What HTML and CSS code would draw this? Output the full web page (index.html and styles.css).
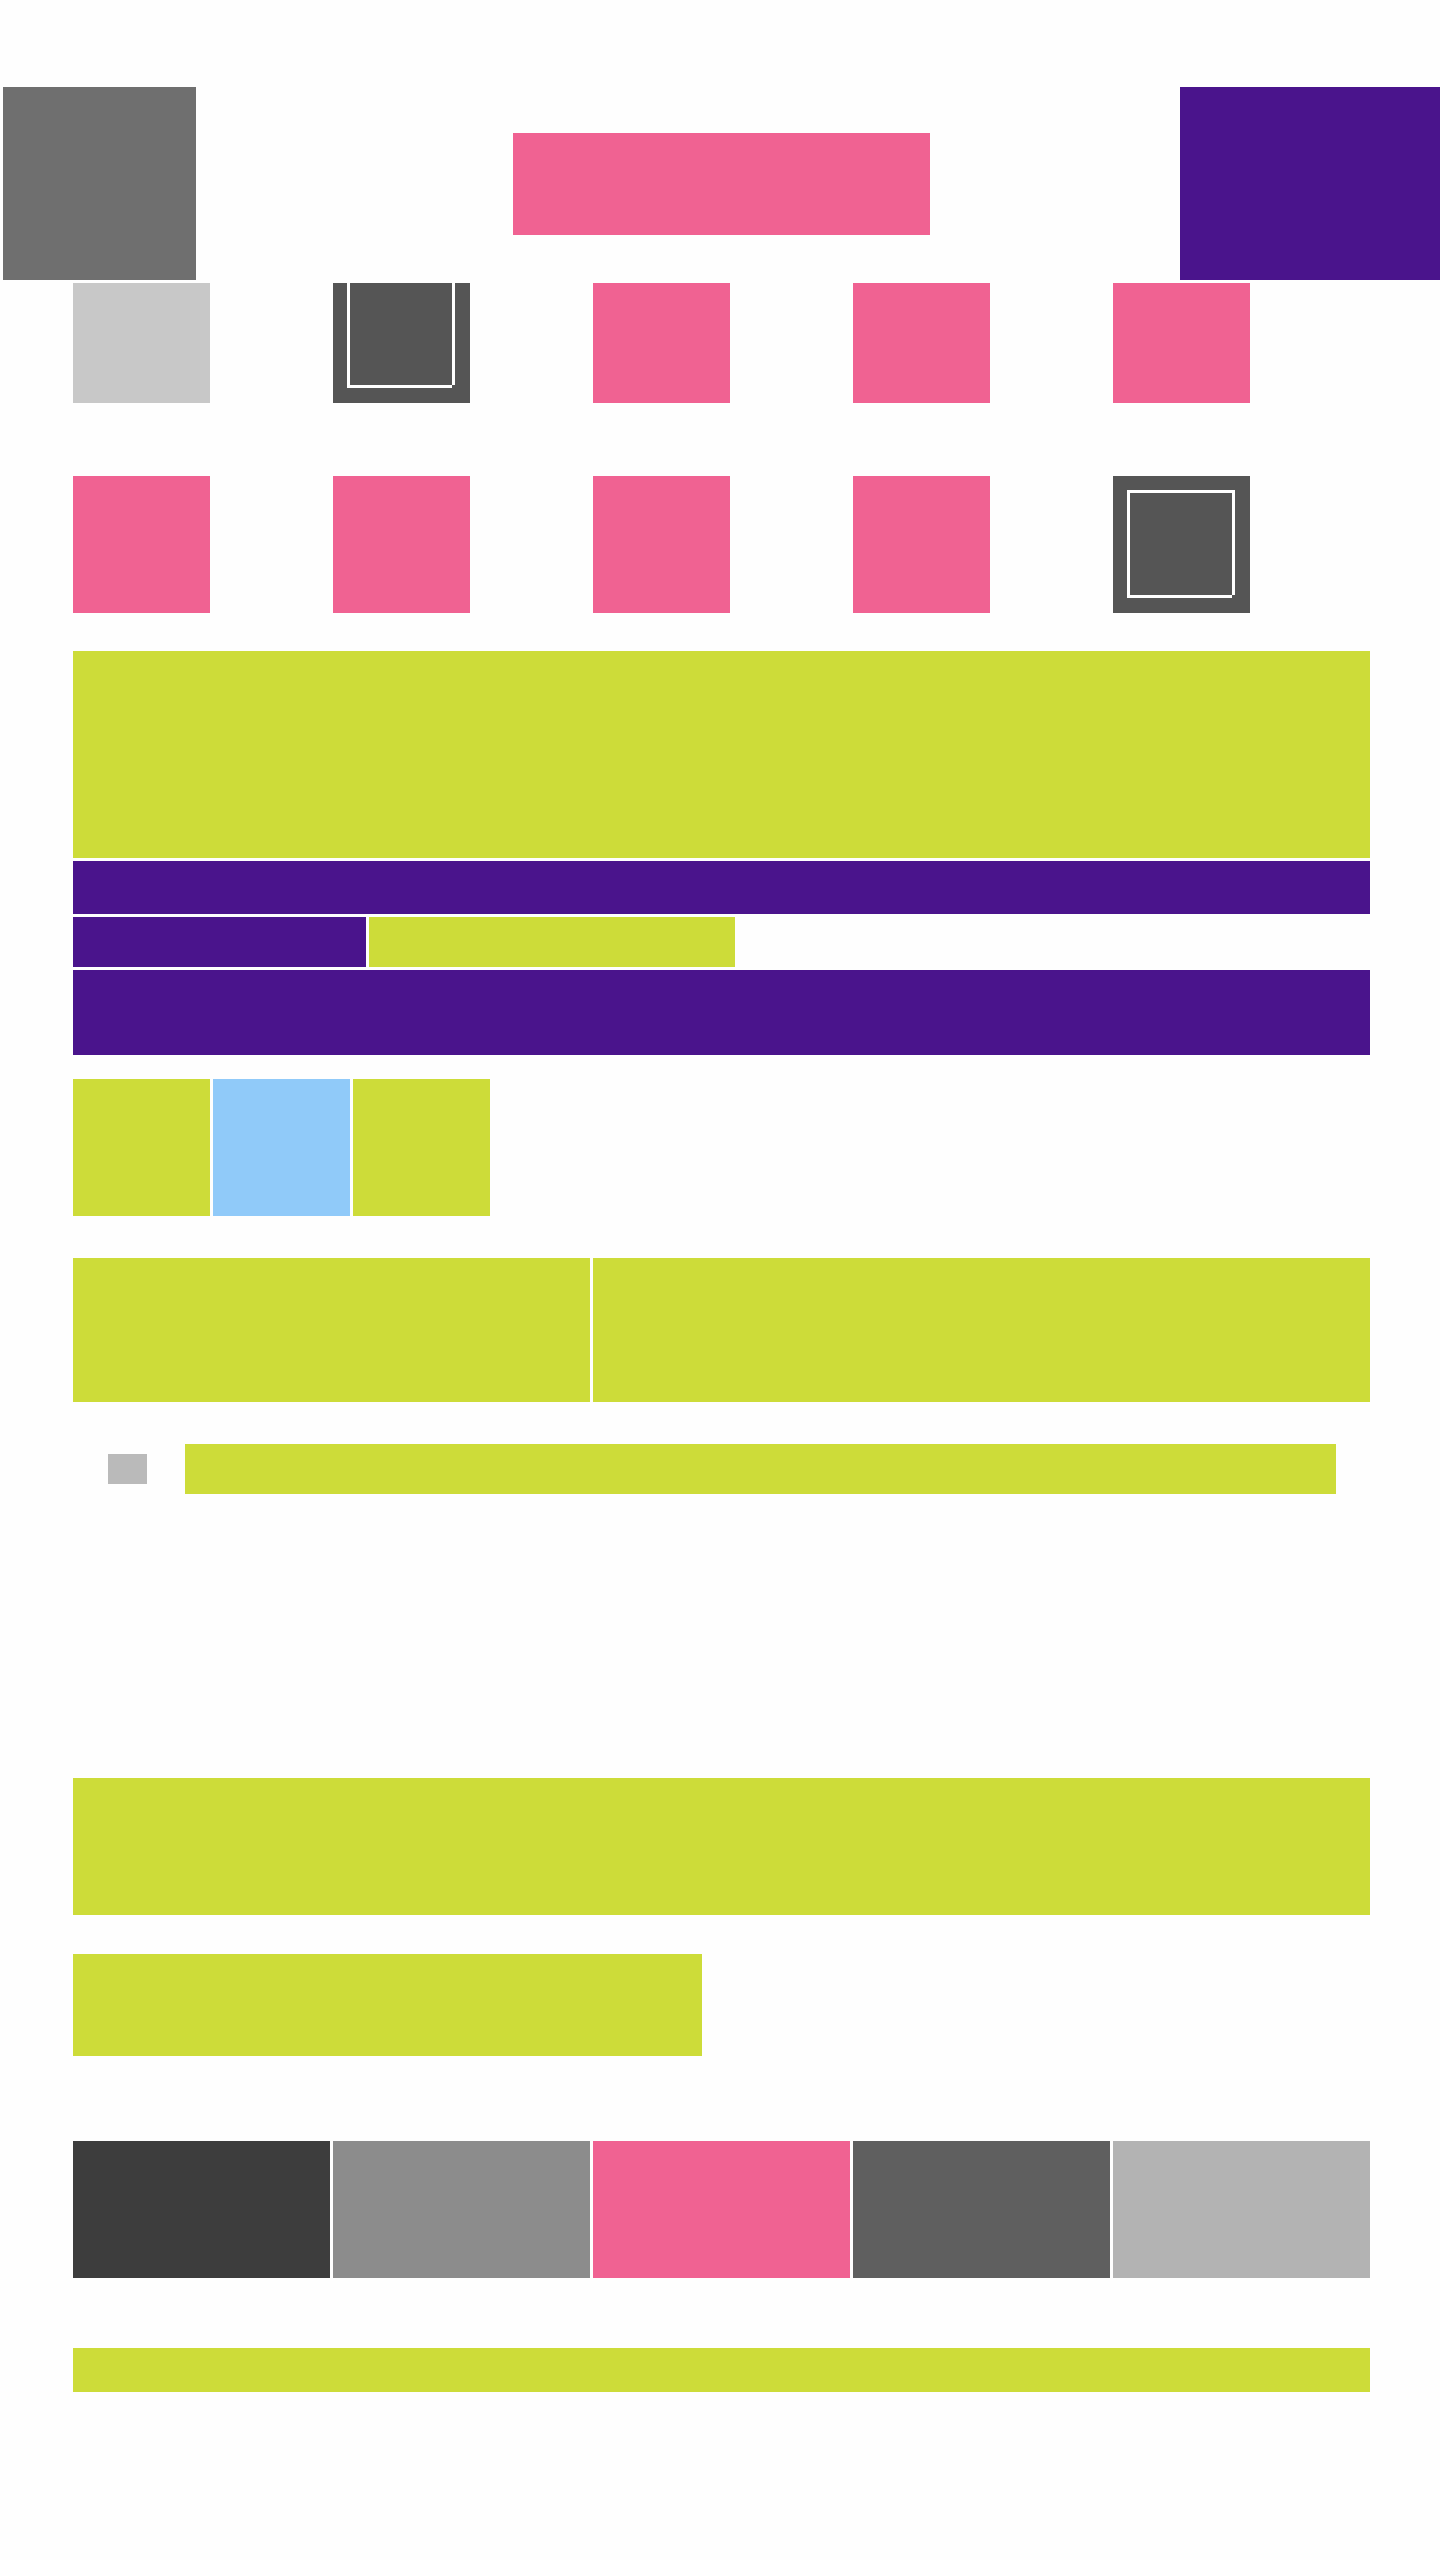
FILE: index.html
```html
<!DOCTYPE html>
<html lang="en">
<head>
<meta charset="utf-8">
<title>Layout</title>
<link rel="stylesheet" href="styles.css">
</head>
<body>
<header class="top">
  <div class="logo"></div>
  <div class="banner"></div>
  <div class="account"></div>
</header>

<div class="page">
  <section class="icons">
    <div class="icon short light"></div>
    <div class="icon short dark"><span class="frame"></span></div>
    <div class="icon short pink"></div>
    <div class="icon short pink"></div>
    <div class="icon short pink"></div>
    <div class="icon pink"></div>
    <div class="icon pink"></div>
    <div class="icon pink"></div>
    <div class="icon pink"></div>
    <div class="icon dark"><span class="frame"></span></div>
  </section>

  <section class="stack">
    <div class="hero lime"></div>
    <div class="bar-a purple"></div>
    <div class="bar-row">
      <div class="bar-left purple"></div>
      <div class="bar-right lime"></div>
    </div>
    <div class="bar-c purple"></div>
  </section>

  <section class="trio">
    <div class="sq lime"></div>
    <div class="sq blue"></div>
    <div class="sq lime"></div>
  </section>

  <section class="split">
    <div class="split-l lime"></div>
    <div class="split-r lime"></div>
  </section>

  <section class="list-row">
    <div class="chip"></div>
    <div class="line lime"></div>
  </section>

  <section class="wide lime"></section>
  <section class="half lime"></section>

  <section class="swatches">
    <div class="sw s1"></div>
    <div class="sw s2"></div>
    <div class="sw s3"></div>
    <div class="sw s4"></div>
    <div class="sw s5"></div>
  </section>

  <footer class="foot lime"></footer>
</div>
</body>
</html>
```

FILE: styles.css
```css
* { box-sizing: border-box; }
html, body { margin: 0; padding: 0; background: #fefefe; }
body { width: 1440px; min-height: 2560px; overflow-x: hidden; font-family: "Liberation Sans", Arial, sans-serif; }

.lime { background: #cddc39; }
.purple { background: #4a148c; }
.pink { background: #f06292; }
.blue { background: #90caf9; }

.top {
  display: flex;
  align-items: center;
  padding: 87px 0 0 3px;
  height: 280px;
}
.logo { width: 193px; height: 193px; background: #6f6f6f; flex: none; }
.banner { width: 417px; height: 102px; margin-left: 317px; background: #f06292; flex: none; }
.account { width: 260px; height: 193px; margin-left: 250px; background: #4a148c; flex: none; }

.page { margin-left: 73px; width: 1297px; }

.icons {
  margin-top: 3px;
  display: grid;
  grid-template-columns: repeat(5, 257px);
  column-gap: 3px;
  row-gap: 73px;
}
.icon {
  width: 137px;
  height: 137px;
  display: flex;
  align-items: flex-end;
  padding: 0 0 18px 14px;
  overflow: hidden;
}
.icon.short { height: 120px; }
.light { background: #c8c8c8; }
.dark { background: #555555; }
.frame {
  display: block;
  flex: none;
  width: 105px;
  height: 105px;
  border-left: 3px solid #fff;
  border-top: 3px solid #fff;
  box-shadow: 3px 0 0 #fff, 0 3px 0 #fff;
}

.stack { margin-top: 38px; display: flex; flex-direction: column; gap: 3px; }
.hero { height: 207px; }
.bar-a { height: 53px; }
.bar-row { display: flex; gap: 3px; height: 50px; }
.bar-left { width: 293px; }
.bar-right { width: 366px; }
.bar-c { height: 85px; }

.trio { margin-top: 24px; display: flex; gap: 3px; }
.sq { width: 137px; height: 137px; }

.split { margin-top: 42px; display: flex; gap: 3px; height: 144px; }
.split-l { width: 517px; }
.split-r { flex: 1; }

.list-row {
  margin-top: 42px;
  height: 50px;
  display: flex;
  align-items: center;
  padding: 0 34px 0 35px;
  gap: 38px;
}
.chip { width: 39px; height: 30px; background: #bababa; flex: none; }
.line { flex: 1; height: 50px; }

.wide { margin-top: 284px; height: 137px; }
.half { margin-top: 39px; width: 629px; height: 102px; }

.swatches { margin-top: 85px; display: flex; gap: 3px; }
.sw { width: 257px; height: 137px; }
.s1 { background: #3d3d3d; }
.s2 { background: #8c8c8c; }
.s3 { background: #f06292; }
.s4 { background: #5f5f5f; }
.s5 { background: #b3b3b3; }

.foot { margin-top: 70px; height: 44px; }
```
